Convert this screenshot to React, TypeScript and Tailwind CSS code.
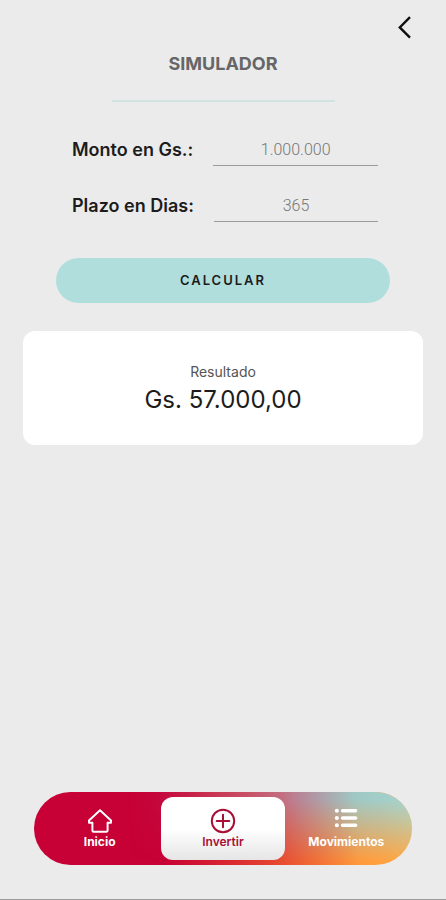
import React, { useState } from 'react';

const ANNUAL_RATE = 0.057;

const parseAmount = (value: string) => Number(value.replace(/\./g, '').replace(',', '.')) || 0;

const formatAmount = (value: number) => {
  const [whole, cents] = value.toFixed(2).split('.');
  return `${whole.replace(/\B(?=(\d{3})+$)/g, '.')},${cents}`;
};

const calculate = (amount: string, days: string) =>
  (parseAmount(amount) * ANNUAL_RATE * parseAmount(days)) / 365;

function HomeIcon() {
  return (
    <svg viewBox="0 0 26 26" className="w-[26px] h-[26px]" fill="none" stroke="currentColor" strokeWidth="2" strokeLinejoin="round">
      <path d="M13 2.2 2 12.4v2.4h3.4V22.4q0 1.4 1.4 1.4h12.4q1.4 0 1.4-1.4v-7.6H24v-2.4z" />
    </svg>
  );
}

function InvestIcon() {
  return (
    <svg viewBox="0 0 26 26" className="w-[26px] h-[26px]" fill="none" stroke="currentColor" strokeWidth="2" strokeLinecap="round">
      <circle cx="13" cy="13" r="11.2" />
      <path d="M6.7 13h12.6M13 6.7v12.6" />
    </svg>
  );
}

function ListIcon() {
  return (
    <svg viewBox="0 0 26 26" className="w-[26px] h-[26px]" fill="none" stroke="currentColor" strokeWidth="4" strokeLinecap="round">
      <path d="M3.8 2.8h.1M3.8 10h.1M3.8 17.2h.1" />
      <path d="M9.6 2.8h13M9.6 10h13M9.6 17.2h13" strokeWidth="3.6" />
    </svg>
  );
}

export default function App() {
  const [amount, setAmount] = useState('1.000.000');
  const [days, setDays] = useState('365');
  const [result, setResult] = useState(calculate('1.000.000', '365'));

  const onSubmit = (event: React.FormEvent) => {
    event.preventDefault();
    setResult(calculate(amount, days));
  };

  return (
    <div className="min-h-screen flex flex-col bg-[#ebebeb] border-b border-[#9c9c9c] font-['Inter',sans-serif] text-[#1c1c1c]">
      <header className="flex flex-col">
        <button type="button" aria-label="Volver" className="self-end mt-3 mr-6 p-1">
          <svg viewBox="0 0 24 24" className="w-6 h-6" fill="none" stroke="#111" strokeWidth="2.4">
            <path d="M16 1.2 5.8 11.4 16 21.6" />
          </svg>
        </button>
        <h1 className="mt-2 text-center text-[18px] leading-6 font-bold text-[#666]">SIMULADOR</h1>
        <hr className="mt-6 mx-auto w-1/2 border-0 h-[2px] bg-[#cfe3e1]" />
      </header>

      <main className="flex-1">
        <form onSubmit={onSubmit} className="mt-8 px-14">
          <div className="pl-4 pr-3 space-y-6">
            <div className="flex gap-5">
              <label htmlFor="amount" className="text-[18px] leading-8 font-semibold">Monto en Gs.:</label>
              <input
                id="amount"
                value={amount}
                onChange={(event) => setAmount(event.target.value)}
                inputMode="numeric"
                className="flex-1 min-w-0 h-8 border-b border-[#9b9b9b] text-center text-[16px] font-['Roboto',sans-serif] font-light text-[#777] focus:outline-none"
              />
            </div>
            <div className="flex gap-5">
              <label htmlFor="days" className="text-[18px] leading-8 font-semibold">Plazo en Dias:</label>
              <input
                id="days"
                value={days}
                onChange={(event) => setDays(event.target.value)}
                inputMode="numeric"
                className="flex-1 min-w-0 h-8 border-b border-[#9b9b9b] text-center text-[16px] font-['Roboto',sans-serif] font-light text-[#777] focus:outline-none"
              />
            </div>
          </div>
          <button
            type="submit"
            className="mt-9 w-full h-[45px] rounded-full bg-[#b0dedd] text-[13px] font-semibold tracking-[2px]"
          >
            CALCULAR
          </button>
        </form>

        <section className="mt-7 mx-[23px] h-[114px] rounded-xl bg-white flex flex-col items-center justify-center">
          <h2 className="text-[14px] leading-6 text-[#555]">Resultado</h2>
          <output htmlFor="amount days" className="text-[24px] leading-8">Gs. {formatAmount(result)}</output>
        </section>
      </main>

      <nav className="relative mx-[34px] mb-[34px] h-[73px] px-1 py-[5px] grid grid-cols-3 rounded-full overflow-hidden bg-[linear-gradient(90deg,#c70035_0%,#c70035_34%,#e3402f_62%,#ff9a3c_86%,#ffab45_100%)] text-white text-[12px] leading-4 font-bold">
        {/* cooler tint fading in from the top right */}
        <div className="absolute inset-0 bg-[linear-gradient(90deg,#b82860_30%,#bf7089_65%,#9fc8c4_85%,#a6d5d0_100%)] [mask-image:linear-gradient(180deg,#000_10%,transparent_95%),linear-gradient(90deg,transparent_25%,#000_70%)] [mask-composite:intersect]" />
        <a href="#inicio" className="relative flex flex-col items-center pt-[11px]">
          <HomeIcon />
          Inicio
        </a>
        <a
          href="#invertir"
          aria-current="page"
          className="relative flex flex-col items-center pt-[11px] rounded-xl bg-linear-to-b from-white from-50% to-[#e6e6e6] font-semibold text-[#a90f35]"
        >
          <InvestIcon />
          Invertir
        </a>
        <a href="#movimientos" className="relative flex flex-col items-center pt-[11px]">
          <ListIcon />
          Movimientos
        </a>
      </nav>
    </div>
  );
}
